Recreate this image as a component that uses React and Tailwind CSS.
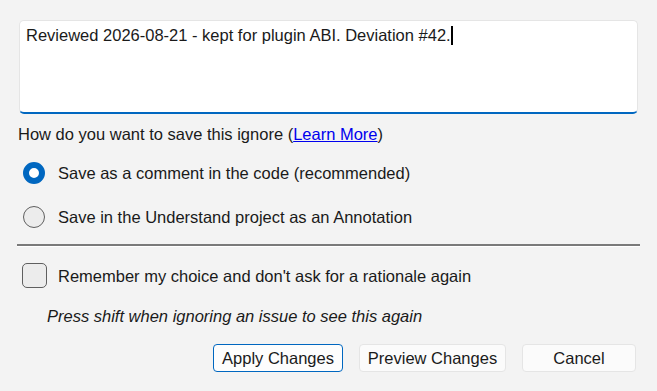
export default function App() {
  const font = { fontFamily: '"Liberation Sans", Arial, sans-serif' };
  return (
    <div className="w-[657px] h-[391px] bg-[#f3f3f3] text-[#1a1a1a] relative overflow-hidden" style={font}>
      <div className="pl-[19px] pr-[19px] pt-[20px]">
        <div className="h-[94px] bg-white rounded-[5px] border border-[#e5e5e5] border-b-2 border-b-[#0067c0] px-[6px] pt-[3px] text-[16.5px] leading-[22px]">
          <span>Reviewed 2026-08-21 - kept for plugin ABI. Deviation #42.</span>
          <span className="inline-block w-[2px] h-[19px] bg-black align-[-4px]"></span>
        </div>
      </div>
      <div className="pl-[18px] mt-[9px] text-[16.5px] leading-[22px]">
        How do you want to save this ignore (<span className="text-[#0000ee] underline">Learn More</span>)
      </div>
      <div className="pl-[23px] mt-[17px] flex items-center gap-[13px] text-[16.5px] leading-[22px]">
        <span className="w-[22px] h-[22px] rounded-full border-[6px] border-[#0067c0] bg-white box-border"></span>
        <span>Save as a comment in the code (recommended)</span>
      </div>
      <div className="pl-[23px] mt-[22px] flex items-center gap-[13px] text-[16.5px] leading-[22px]">
        <span className="w-[22px] h-[22px] rounded-full border border-[#5f5f5f] bg-[#ececec] box-border"></span>
        <span>Save in the Understand project as an Annotation</span>
      </div>
      <div className="mx-[17px] mt-[16px] h-[2px] bg-[#7a7a7a]"></div>
      <div className="mx-[17px] h-[1px] bg-white"></div>
      <div className="pl-[22px] mt-[16px] flex items-center gap-[11px] text-[16.5px] leading-[22px]">
        <span className="w-[25px] h-[25px] rounded-[5px] border border-[#5f5f5f] bg-[#ececec] box-border"></span>
        <span>Remember my choice and don't ask for a rationale again</span>
      </div>
      <div className="pl-[47px] mt-[17px] text-[16.5px] leading-[22px] italic">
        Press shift when ignoring an issue to see this again
      </div>
      <div className="mt-[17px] flex gap-[16px] pl-[213px] text-[16.5px]">
        <button className="w-[130px] h-[28px] rounded-[4px] border border-[#0067c0] bg-[#fdfdfd] text-[#1a1a1a]">Apply Changes</button>
        <button className="w-[147px] h-[28px] rounded-[4px] border border-[#e5e5e5] bg-[#fbfbfb] text-[#1a1a1a]">Preview Changes</button>
        <button className="w-[114px] h-[28px] rounded-[4px] border border-[#e5e5e5] bg-[#fbfbfb] text-[#1a1a1a]">Cancel</button>
      </div>
    </div>
  );
}
